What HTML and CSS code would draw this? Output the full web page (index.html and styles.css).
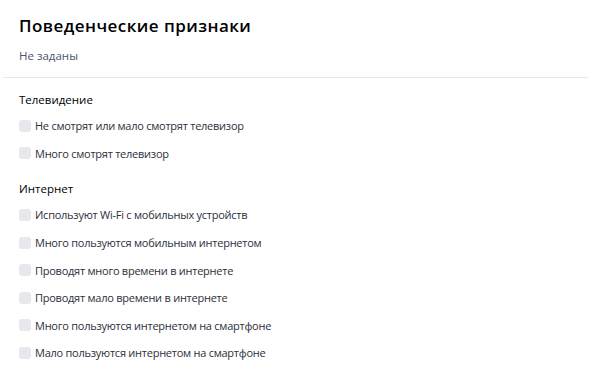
FILE: index.html
```html
<!DOCTYPE html>
<html lang="ru">
<head>
  <meta charset="UTF-8" />
  <title>Поведенческие признаки</title>
  <link rel="stylesheet" href="styles.css">
</head>
<body>

<div class="panel">
  <div class="panel-head">
    <h2>Поведенческие признаки</h2>
    <p class="status">Не заданы</p>
  </div>

  <div class="group">
    <h3>Телевидение</h3>
    <label class="check"><span class="box"></span>Не смотрят или мало смотрят телевизор</label>
    <label class="check"><span class="box"></span>Много смотрят телевизор</label>
  </div>

  <div class="group">
    <h3>Интернет</h3>
    <label class="check"><span class="box"></span>Используют Wi-Fi с мобильных устройств</label>
    <label class="check"><span class="box"></span>Много пользуются мобильным интернетом</label>
    <label class="check"><span class="box"></span>Проводят много времени в интернете</label>
    <label class="check"><span class="box"></span>Проводят мало времени в интернете</label>
    <label class="check"><span class="box"></span>Много пользуются интернетом на смартфоне</label>
    <label class="check"><span class="box"></span>Мало пользуются интернетом на смартфоне</label>
  </div>
</div>

</body>
</html>
```

FILE: styles.css
```css
body {
  font-family: "Open Sans", Arial, sans-serif;
  background: #fff;
  color: #222;
  margin: 0;
  padding: 0;
}

.panel {
  padding: 0 3px;
}

.panel-head {
  padding: 15px 16px 0;
  border-bottom: 1px solid #e6e7ec;
}

.panel-head h2 {
  margin: 0;
  font-size: 17px;
  font-weight: 600;
  letter-spacing: 0.45px;
  line-height: 22px;
  color: #000;
}

.status {
  margin: 10px 0 0;
  padding-bottom: 12px;
  font-size: 11.5px;
  line-height: 18px;
  color: #4a5473;
}

.group {
  padding: 13px 16px 0;
}

.group h3 {
  margin: 0 0 3px;
  font-size: 11.5px;
  font-weight: 400;
  line-height: 18px;
  color: #000;
}

.check {
  display: flex;
  align-items: center;
  height: 27.6px;
  font-size: 11px;
  letter-spacing: -0.25px;
  color: #2b2f3a;
}

.box {
  width: 12px;
  height: 12px;
  border-radius: 3px;
  background: #e6e8ee;
  margin-right: 4px;
  flex: none;
}
```
